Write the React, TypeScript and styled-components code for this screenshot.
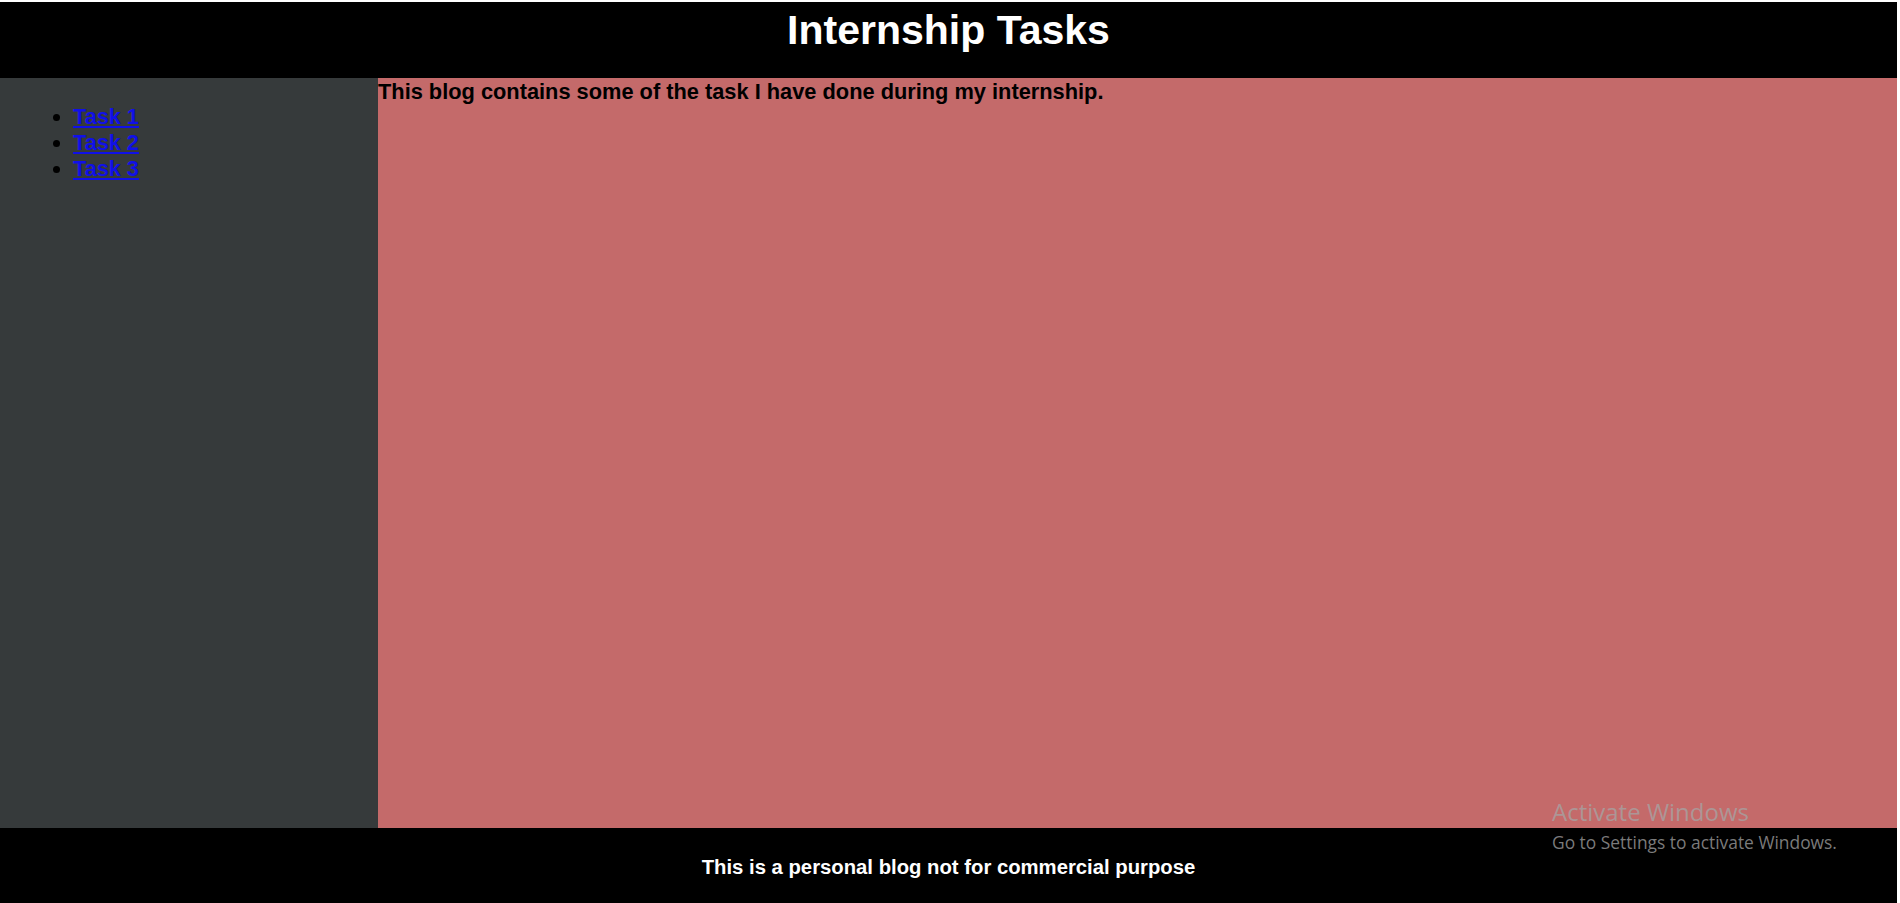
import React from "react";
import styled, { createGlobalStyle } from "styled-components";

const GlobalStyle = createGlobalStyle`
  html, body { margin: 0; padding: 0; background: #ffffff; }
  body { font-family: "Liberation Sans", Arial, sans-serif; }
`;

const Page = styled.div`
  box-sizing: border-box;
  height: 903px;
  padding: 2px 3px 0 0;
  display: grid;
  grid-template-rows: 76px 1fr 75px;
  position: relative;
  overflow: hidden;
`;

const Header = styled.header`
  background: #000000;
  display: flex;
  justify-content: center;
  align-items: flex-start;
`;

const Title = styled.h1`
  margin: 4px 0 0;
  color: #ffffff;
  font-size: 41px;
  font-weight: 700;
  line-height: 48px;
`;

const Body = styled.div`
  display: grid;
  grid-template-columns: 378px 1fr;
`;

const Sidebar = styled.nav`
  background: #363a3b;
`;

const TaskList = styled.ul`
  margin: 26px 0 0;
  padding-left: 73px;
  font-size: 21.7px;
  line-height: 26px;
  font-weight: 700;
  color: #000000;
`;

const TaskLink = styled.a`
  color: #1010e8;
  text-decoration: underline;
`;

const Main = styled.main`
  background: #c46a6a;
  padding-top: 2px;
`;

const Intro = styled.p`
  margin: 0;
  font-size: 21.8px;
  line-height: 24px;
  font-weight: 700;
  color: #000000;
`;

const Footer = styled.footer`
  background: #000000;
  display: flex;
  align-items: center;
  justify-content: center;
  padding-top: 4px;
`;

const FooterText = styled.p`
  margin: 0;
  color: #ffffff;
  font-size: 20.3px;
  font-weight: 700;
`;

const Watermark = styled.div`
  position: absolute;
  left: 1552px;
  top: 796px;
  font-family: "Open Sans", "Noto Sans", sans-serif;
  color: rgba(165, 165, 165, 0.75);
  pointer-events: none;
`;

const WatermarkTitle = styled.div`
  font-size: 24px;
  line-height: 32px;
`;

const WatermarkSub = styled.div`
  font-size: 17.4px;
  line-height: 29px;
`;

export default function App() {
  return (
    <>
      <GlobalStyle />
      <Page>
        <Header>
          <Title>Internship Tasks</Title>
        </Header>
        <Body>
          <Sidebar>
            <TaskList>
              <li><TaskLink href="#task1">Task 1</TaskLink></li>
              <li><TaskLink href="#task2">Task 2</TaskLink></li>
              <li><TaskLink href="#task3">Task 3</TaskLink></li>
            </TaskList>
          </Sidebar>
          <Main>
            <Intro>This blog contains some of the task I have done during my internship.</Intro>
          </Main>
        </Body>
        <Footer>
          <FooterText>This is a personal blog not for commercial purpose</FooterText>
        </Footer>
        <Watermark>
          <WatermarkTitle>Activate Windows</WatermarkTitle>
          <WatermarkSub>Go to Settings to activate Windows.</WatermarkSub>
        </Watermark>
      </Page>
    </>
  );
}
